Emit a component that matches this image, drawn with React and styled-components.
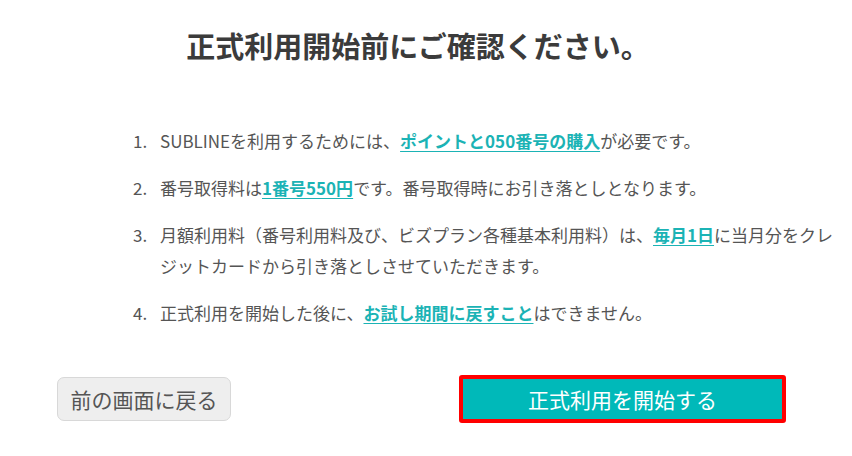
import React from "react";
import styled, { createGlobalStyle } from "styled-components";

const GlobalStyle = createGlobalStyle`
  html, body {
    margin: 0;
    padding: 0;
    background: #fff;
  }
  body {
    font-family: "Noto Sans CJK JP", "Noto Sans", sans-serif;
    color: #555;
  }
`;

const items = [
  [
    { t: "SUBLINEを利用するためには、" },
    { t: "ポイントと050番号の購入", link: true },
    { t: "が必要です。" },
  ],
  [
    { t: "番号取得料は" },
    { t: "1番号550円", link: true },
    { t: "です。番号取得時にお引き落としとなります。" },
  ],
  [
    { t: "月額利用料（番号利用料及び、ビズプラン各種基本利用料）は、" },
    { t: "毎月1日", link: true },
    { t: "に当月分をクレジットカードから引き落としさせていただきます。" },
  ],
  [
    { t: "正式利用を開始した後に、" },
    { t: "お試し期間に戻すこと", link: true },
    { t: "はできません。" },
  ],
];

const App = () => {
  return (
    <Page>
      <GlobalStyle />
      <Title>正式利用開始前にご確認ください。</Title>
      <List>
        {items.map((parts, i) => (
          <Item key={i}>
            <Num>{i + 1}.</Num>
            <Text>
              {parts.map((p, j) =>
                p.link ? (
                  <Link key={j} href="#">
                    {p.t}
                  </Link>
                ) : (
                  <span key={j}>{p.t}</span>
                )
              )}
            </Text>
          </Item>
        ))}
      </List>
      <Actions>
        <Button>前の画面に戻る</Button>
        <Button primary>正式利用を開始する</Button>
      </Actions>
    </Page>
  );
};

const Page = styled.div`
  width: 852px;
  height: 456px;
  box-sizing: border-box;
  padding-top: 25px;
`;

const Title = styled.h1`
  margin: 0 0 60px;
  padding-right: 16px;
  text-align: center;
  font-size: 29px;
  line-height: 40px;
  font-weight: 700;
  color: #3b3b3b;
`;

const List = styled.ol`
  list-style: none;
  margin: 0;
  padding: 0 0 0 133px;
`;

const Item = styled.li`
  display: flex;
  font-size: 17px;
  line-height: 31px;
  margin-bottom: 16px;

  &:last-child {
    margin-bottom: 0;
  }
`;

const Num = styled.span`
  flex: 0 0 27px;
`;

const Text = styled.span`
  width: 680px;
`;

const Link = styled.a`
  color: #1bb3b5;
  font-weight: 700;
  text-decoration: underline;
  text-underline-offset: 3px;
`;

const Actions = styled.div`
  display: flex;
  justify-content: space-between;
  align-items: center;
  margin-top: 47px;
  padding: 0 66px 0 57px;
`;

const Button = styled.button`
  box-sizing: border-box;
  font-family: inherit;
  font-size: 21px;
  cursor: pointer;
  width: ${(p) => (p.primary ? "327px" : "174px")};
  height: ${(p) => (p.primary ? "48px" : "44px")};
  border-radius: ${(p) => (p.primary ? "3px" : "7px")};
  background: ${(p) => (p.primary ? "#00b9b9" : "#eeeeee")};
  color: ${(p) => (p.primary ? "#fff" : "#555")};
  border: ${(p) => (p.primary ? "4px solid #ff0000" : "1px solid #d8d8d8")};
  padding: 0;
`;

export default App;
